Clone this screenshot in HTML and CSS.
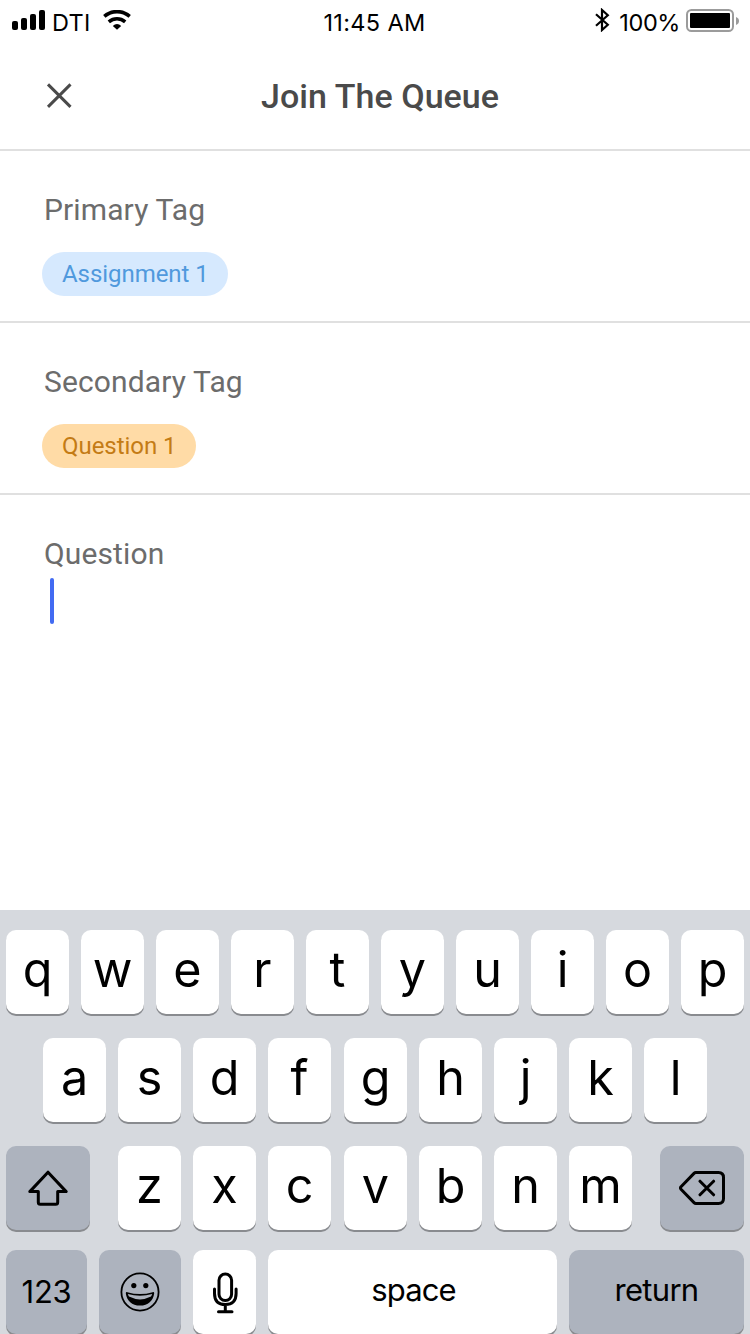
FILE: index.html
```html
<!DOCTYPE html>
<html lang="en">
<head>
<meta charset="utf-8">
<title>Join The Queue</title>
<link rel="stylesheet" href="styles.css">
</head>
<body>
<div class="screen">
  <div class="status">
    <div class="status-left">
      <svg class="signal" width="33" height="20" viewBox="0 0 33 20"><rect x="0" y="11" width="6" height="9" rx="2"/><rect x="9" y="8" width="6" height="12" rx="2"/><rect x="18" y="4" width="6" height="16" rx="2"/><rect x="27" y="0" width="6" height="20" rx="2"/></svg>
      <span class="carrier">DTI</span>
      <svg class="wifi" width="28" height="20" viewBox="0 0 28 20"><path class="arc" d="M1.3 6.3Q6.9 1.6 14 1.6T26.7 6.3"/><path class="arc" d="M5.8 11.8Q9.4 8.8 14 8.8T22.2 11.8"/><path d="M9.8 15.9Q11.7 14 14 14T18.2 15.9L14 19.8Z"/></svg>
    </div>
    <div class="clock">11:45 AM</div>
    <div class="status-right">
      <svg class="bluetooth" width="15" height="24" viewBox="0 0 15 24"><path d="M1 6.2L12.8 16.8L7 22V2L12.8 7.2L1 17.8"/></svg>
      <span class="percent">100%</span>
      <svg class="battery" width="54" height="24" viewBox="0 0 54 24"><rect class="case" x="1" y="1" width="46" height="21" rx="4.5"/><rect x="4" y="4" width="40" height="15" rx="1"/><path class="tip" d="M50 8Q53 9.2 53 12T50 16Z"/></svg>
    </div>
  </div>
  <header class="header">
    <svg class="close" width="26" height="26" viewBox="0 0 26 26"><path d="M2 1.4L24.5 23.9M24.5 1.4L2 23.9"/></svg>
    <h1 class="title">Join The Queue</h1>
  </header>
  <section class="field">
    <h2 class="label">Primary Tag</h2>
    <span class="tag tag-primary">Assignment 1</span>
  </section>
  <section class="field">
    <h2 class="label">Secondary Tag</h2>
    <span class="tag tag-secondary">Question 1</span>
  </section>
  <section class="question">
    <h2 class="label">Question</h2>
    <div class="caret"></div>
  </section>
  <div class="keyboard">
    <div class="row"><div class="key">q</div><div class="key">w</div><div class="key">e</div><div class="key">r</div><div class="key">t</div><div class="key">y</div><div class="key">u</div><div class="key">i</div><div class="key">o</div><div class="key">p</div></div>
    <div class="row row-home"><div class="key">a</div><div class="key">s</div><div class="key">d</div><div class="key">f</div><div class="key mid">g</div><div class="key">h</div><div class="key">j</div><div class="key">k</div><div class="key">l</div></div>
    <div class="row row-lower">
      <div class="key dark shift"><svg width="42" height="38" viewBox="0 0 42 38"><path d="M21 3.2L39.2 22.6H30.7V33.2Q30.7 35.2 28.7 35.2H13.3Q11.3 35.2 11.3 33.2V22.6H2.8Z"/></svg></div>
      <div class="key">z</div><div class="key">x</div><div class="key">c</div><div class="key mid">v</div><div class="key">b</div><div class="key">n</div><div class="key">m</div>
      <div class="key dark delete"><svg width="46" height="34" viewBox="0 0 46 34"><path d="M16.8 1.5H39.5Q44.5 1.5 44.5 6.5V27.5Q44.5 32.5 39.5 32.5H16.8Q15.9 32.5 15 31.6L2 18.2Q1 17 2 15.8L15 2.4Q15.9 1.5 16.8 1.5ZM21 10.2L34.6 23.8M34.6 10.2L21 23.8"/></svg></div>
    </div>
    <div class="row row-bottom">
      <div class="key dark numbers">123</div>
      <div class="key dark emoji"><svg width="40" height="40" viewBox="0 0 40 40"><circle class="face" cx="20" cy="20" r="18.6"/><ellipse cx="13.8" cy="13.6" rx="2.6" ry="2.7"/><ellipse cx="25.8" cy="13.6" rx="2.6" ry="2.7"/><path class="mouth" d="M5.8 21.2Q5.8 19.8 7.4 20.2Q20 24 32.6 20.2Q34.2 19.8 34.2 21.2C33.2 29 28 33.6 20 33.6S6.8 29 5.8 21.2Z"/><path class="teeth" d="M7.8 22Q20 25.4 32.2 22Q31.8 23.4 31 24.6Q20 30.2 9 24.6Q8.2 23.4 7.8 22Z"/></svg></div>
      <div class="key mic"><svg width="26" height="42" viewBox="0 0 26 42"><rect x="7" y="2" width="12.6" height="26.6" rx="6.3"/><path d="M2.5 17V21.5Q2.5 32.6 13.3 32.6T24.1 21.5V17M13.3 32.6V39.8M6.5 39.8H20"/></svg></div>
      <div class="key space">space</div>
      <div class="key dark return">return</div>
    </div>
  </div>
</div>
</body>
</html>
```
FILE: styles.css
```css
* { box-sizing: border-box; }
body { margin: 0; background: #fff; overflow: hidden; }
svg { display: block; flex: none; }
.screen { width: 750px; height: 1334px; display: flex; flex-direction: column; background: #fff; overflow: hidden; font-family: Roboto, sans-serif; }

.status { height: 40px; flex: none; display: grid; grid-template-columns: 1fr auto 1fr; padding: 0 10px 0 12px; font: 400 23.5px/28px Inter, sans-serif; color: #000; white-space: nowrap; }
.status-left, .status-right { display: flex; align-items: flex-start; }
.status-right { justify-content: flex-end; }
.signal { margin-top: 10px; }
.carrier { margin: 9px 0 0 7px; letter-spacing: 0.3px; }
.wifi { margin: 10px 0 0 12px; }
.arc { fill: none; stroke: #000; stroke-width: 3.6; }
.clock { padding-top: 9px; letter-spacing: 0.35px; margin-right: 3px; }
.bluetooth { margin: 8px 9px 0 0; fill: none; stroke: #000; stroke-width: 2.2; }
.percent { margin: 9px 6px 0 0; letter-spacing: -0.4px; }
.battery { margin: 9px 0 0; }
.case { fill: none; stroke: #9b9b9b; stroke-width: 2; }
.tip { fill: #9b9b9b; }

.header { height: 111px; flex: none; display: flex; align-items: flex-start; padding: 43px 0 0 46px; border-bottom: 2px solid #e0e0e0; color: #4a4a4a; }
.close { fill: none; stroke: #4a4a4a; stroke-width: 3; }
.title { margin: -7px 0 0 189px; font-size: 34px; line-height: 40px; font-weight: 500; letter-spacing: 0.05px; white-space: nowrap; }

.field { height: 172px; flex: none; padding: 41px 0 0 42px; border-bottom: 2px solid #e0e0e0; }
.label { margin: 0 0 0 2px; font-size: 30px; line-height: 36px; font-weight: 400; color: #6c6c6c; letter-spacing: 0.12px; white-space: nowrap; }
.tag { display: flex; width: fit-content; align-items: center; height: 44px; margin-top: 24px; padding: 0 20px; border-radius: 22px; font-size: 24px; line-height: 28px; letter-spacing: -0.05px; white-space: nowrap; }
.tag-primary { width: 186px; background: #d6e9fe; color: #5099dd; }
.tag-secondary { width: 154px; background: #ffdba6; color: #c47b15; }
.question { flex: 1; padding: 41px 0 0 42px; }
.caret { width: 4px; height: 46px; margin: 6px 0 0 8px; border-radius: 2px; background: #426bf2; }

.keyboard { height: 424px; flex: none; padding: 20px 6px 0; background: #d6d9de; font-family: Inter, sans-serif; color: #000; }
.row { display: flex; gap: 12px; height: 84px; margin-bottom: 24px; }
.row-home { padding-left: 37px; }
.row-lower { margin-bottom: 20px; }
.key { width: 63px; height: 84px; flex: none; display: flex; align-items: center; justify-content: center; padding-bottom: 4px; border-radius: 10px; background: #fff; box-shadow: 0 2px 0 #898b8f; font-size: 48.5px; line-height: 60px; }
.mid { margin-left: 1px; }
.dark { background: #adb3be; }
.key svg { fill: none; stroke: #000; stroke-width: 3; stroke-linejoin: round; stroke-linecap: round; }
.shift { width: 84px; margin-right: 16px; padding: 0; }
.delete { width: 84px; margin-left: 16px; padding: 0; }
.numbers { width: 81px; padding: 0; font-size: 31px; letter-spacing: -0.3px; }
.emoji { width: 82px; padding: 0 1px 1px 0; }
.mic { padding: 2px 0 0; }
.space { width: 289px; padding: 0 0 4px 2px; font-size: 31px; letter-spacing: -0.9px; }
.return { width: 175px; padding-bottom: 4px; font-size: 31px; letter-spacing: -0.7px; }
.key .face { stroke-width: 1.8; }
.key svg ellipse, .key svg .mouth { fill: #000; stroke: none; }
.key svg .teeth { fill: #adb3be; stroke: none; }
```
